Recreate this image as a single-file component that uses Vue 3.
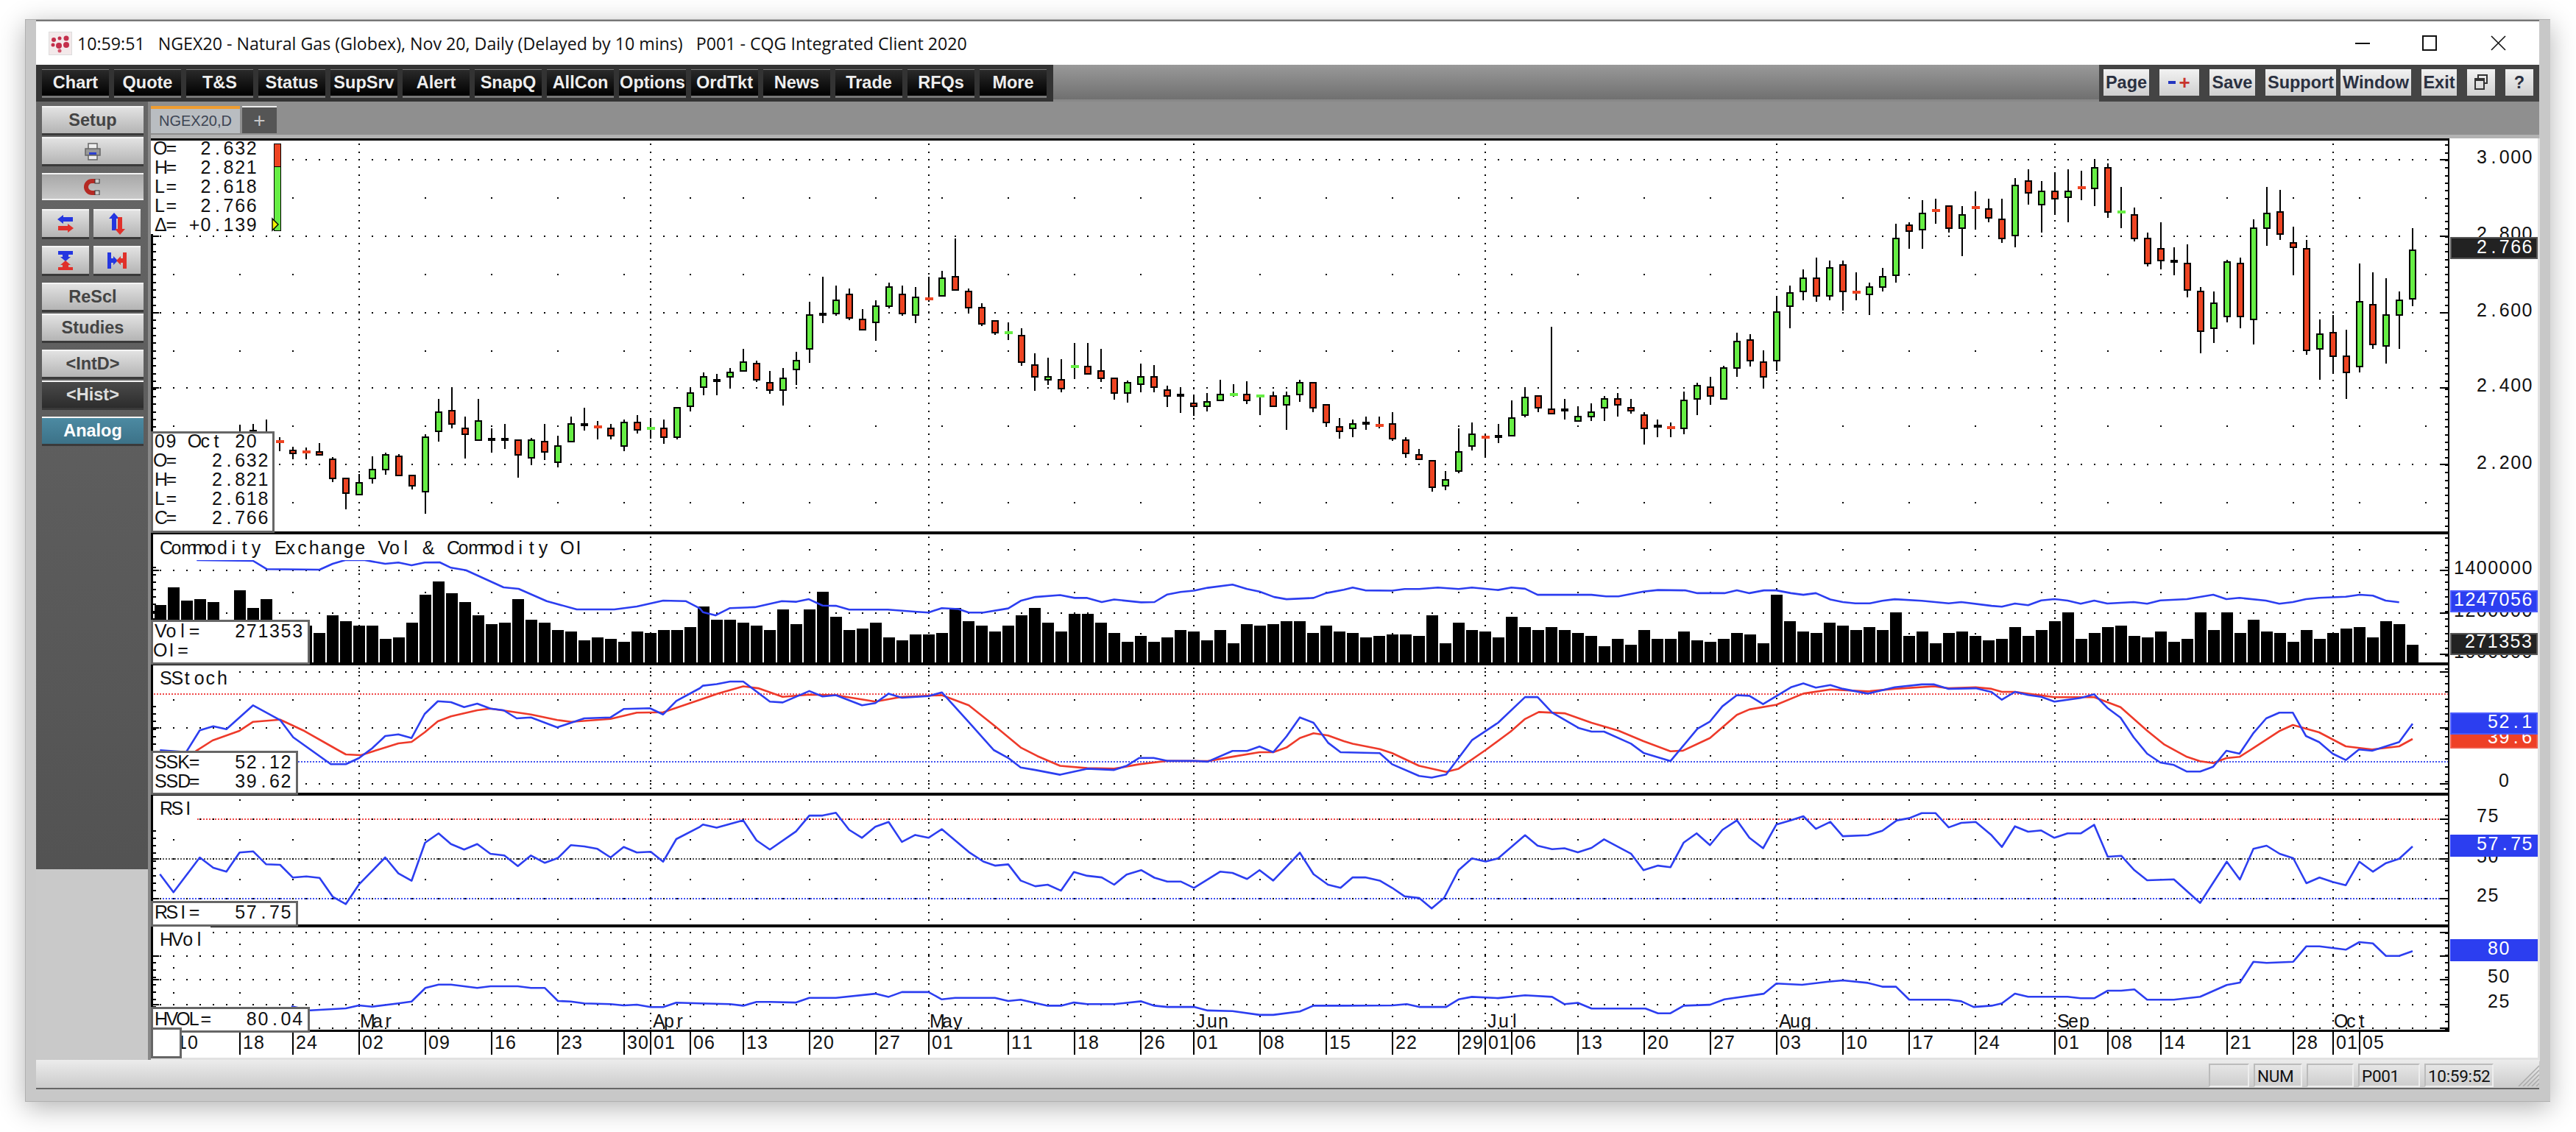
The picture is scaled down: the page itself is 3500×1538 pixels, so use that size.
<template>
  <div class="page">
    <div class="window">
      <!-- Title bar -->
      <div class="titlebar">
        <svg class="logo" width="32" height="32" viewBox="0 0 32 32">
          <rect x="0.5" y="0.5" width="31" height="31" fill="#f3e9ea" stroke="#ddd" />
          <circle cx="7" cy="11" r="3" fill="#c4304c" />
          <circle cx="15" cy="9" r="2.5" fill="#c4304c" />
          <circle cx="24" cy="9" r="3.5" fill="#c4304c" />
          <circle cx="6" cy="18" r="2.5" fill="#c4304c" />
          <circle cx="14" cy="19" r="4" fill="#c4304c" />
          <circle cx="24" cy="18" r="4" fill="#c4304c" />
          <circle cx="15" cy="26" r="2.5" fill="#d3566c" />
        </svg>
        <span class="title-text">{{ windowTitle }}</span>
        <div class="win-controls">
          <svg width="300" height="30" viewBox="0 0 300 30">
            <rect x="50" y="14" width="20" height="2" fill="#111" />
            <rect x="142" y="5" width="18" height="19" fill="none" stroke="#111" stroke-width="2" />
            <path d="M235 5 L254 24 M254 5 L235 24" stroke="#111" stroke-width="1.6" fill="none" />
          </svg>
        </div>
      </div>

      <!-- Toolbar -->
      <div class="toolbar">
        <div class="tb-left">
          <button v-for="b in mainButtons" :key="b" class="tb-btn">{{ b }}</button>
        </div>
        <div class="tb-fill"></div>
        <div class="tb-right">
          <button
            v-for="b in rightButtons"
            :key="b.label"
            :class="['rt-btn', { tight: b.tight }]"
            :style="{ width: b.w + 'px' }"
          >
            <template v-if="b.label === 'zoom'">
              <span class="minus"></span><span class="plus">+</span>
            </template>
            <svg v-else-if="b.label === 'restore'" width="20" height="26" viewBox="0 0 20 26">
              <path d="M6 7V3h12v11h-4" fill="none" stroke="#333" stroke-width="2" />
              <rect x="2" y="8" width="12" height="14" fill="none" stroke="#333" stroke-width="2" />
              <rect x="2" y="8" width="12" height="3" fill="#333" />
            </svg>
            <template v-else>{{ b.label }}</template>
          </button>
        </div>
      </div>

      <div class="body">
        <!-- Left buttons -->
        <div class="side">
          <div class="side-group">
            <button class="side-btn">Setup</button>
            <button class="side-btn">
              <svg width="22" height="24" viewBox="0 0 22 24">
                <rect x="5" y="1" width="12" height="8" fill="#eee" stroke="#666" stroke-width="1.5" />
                <rect x="1" y="8" width="20" height="9" fill="#999" stroke="#666" stroke-width="1.5" />
                <rect x="6" y="13" width="10" height="3" fill="#2c3fd0" />
                <rect x="5" y="17" width="12" height="6" fill="#eee" stroke="#666" stroke-width="1.5" />
              </svg>
            </button>
          </div>
          <div class="side-group">
            <button class="side-btn inset">
              <svg width="24" height="22" viewBox="0 0 24 22">
                <path d="M20 3H11a8 8 0 0 0 0 16h9" fill="none" stroke="#b52a24" stroke-width="6" />
                <rect x="15" y="0" width="6" height="6" fill="#ccc" stroke="#333" />
                <rect x="15" y="16" width="6" height="6" fill="#ccc" stroke="#333" />
              </svg>
            </button>
          </div>
          <div class="side-group">
            <div class="side-row">
              <button class="side-btn half">
                <svg width="24" height="24" viewBox="0 0 24 24">
                  <path d="M1 6 9 0v3h13v6H9v3z" fill="#2436e0" />
                  <path d="M23 18 15 12v3H2v6h13v3z" fill="#e0302a" />
                </svg>
              </button>
              <button class="side-btn half">
                <svg width="24" height="30" viewBox="0 0 24 30">
                  <path d="M8 0 15 8h-4v16H5V8H1z" fill="#2436e0" />
                  <path d="M16 30 9 22h4V6h6v16h4z" fill="#e0302a" />
                </svg>
              </button>
            </div>
          </div>
          <div class="side-group">
            <div class="side-row">
              <button class="side-btn half">
                <svg width="24" height="26" viewBox="0 0 24 26">
                  <path d="M2 0h20v5h-6v3h3l-7 6-7-6h3V5H2z" fill="#2436e0" />
                  <path d="M2 26h20v-4h-6v-3h3l-7-6-7 6h3v3H2z" fill="#e0302a" />
                </svg>
              </button>
              <button class="side-btn half">
                <svg width="26" height="26" viewBox="0 0 26 26">
                  <path d="M0 2v22h5v-8h3v3l6-6-6-6v3H5V2z" fill="#2436e0" />
                  <path d="M26 2v22h-5v-8h-3v3l-6-6 6-6v3h3V2z" fill="#e0302a" />
                </svg>
              </button>
            </div>
          </div>
          <div class="side-group">
            <button class="side-btn">ReScl</button>
            <button class="side-btn">Studies</button>
          </div>
          <div class="side-group">
            <button class="side-btn">&lt;IntD&gt;</button>
            <button class="side-btn dark">&lt;Hist&gt;</button>
          </div>
          <div class="side-group">
            <button class="side-btn teal">Analog</button>
          </div>
          <div class="side-spacer"></div>
          <div class="side-foot"></div>
        </div>

        <div class="main">
          <!-- Tabs -->
          <div class="tabs">
            <div class="tab active">NGEX20,D</div>
            <div class="tab add">+</div>
          </div>

          <!-- Chart, drawn in page coordinates -->
          <svg class="chart" width="3246" height="1254" viewBox="204 188 3246 1254">
            <rect x="204" y="188" width="3246" height="1254" fill="#fff" />
            <rect x="204" y="1437" width="3246" height="5" fill="#e2e2e2" />
            <rect x="3447" y="188" width="3" height="1254" fill="#e2e2e2" />

            <!-- study reference lines -->
            <line
              v-for="l in refLines"
              :key="l.y"
              :x1="l.x"
              :y1="l.y"
              x2="3326"
              :y2="l.y"
              :stroke="l.c"
              stroke-width="2"
              stroke-dasharray="2 2"
              shape-rendering="crispEdges"
            />

            <path :d="dotPath" fill="#000" shape-rendering="crispEdges" />

            <!-- volume -->
            <path :d="volumePath" fill="#000" shape-rendering="crispEdges" />

            <!-- candles -->
            <g shape-rendering="crispEdges">
              <template v-for="c in candles" :key="c.x">
                <rect :x="c.x - 1" :y="c.h" width="2" :height="c.l - c.h" fill="#000" />
                <rect v-if="c.flat" :x="c.x - 5" :y="c.t - 2" width="11" height="4" :fill="c.color" />
                <rect
                  v-else
                  :x="c.x - 4"
                  :y="c.t + 1"
                  width="8"
                  :height="c.b - c.t - 2"
                  :fill="c.color"
                  stroke="#000"
                  stroke-width="2"
                />
              </template>
            </g>

            <!-- indicator curves -->
            <polyline
              v-for="s in series"
              :key="s.id"
              :points="s.points"
              fill="none"
              :stroke="s.color"
              stroke-width="2.6"
              stroke-linejoin="round"
            />

            <!-- frames -->
            <path :d="framePath" fill="#000" shape-rendering="crispEdges" />

            <!-- date axis -->
            <text
              v-for="d in dateLabels"
              :key="d.x"
              class="mono"
              :x="cells(d.s, d.x, 15)"
              y="1425"
            >{{ d.s }}</text>
            <text
              v-for="m in monthLabels"
              :key="m.s"
              class="mono"
              :x="cells(m.s, m.x, 15)"
              y="1396"
            >{{ m.s }}</text>

            <!-- panel titles -->
            <g v-for="t in panelTitles" :key="t.s">
              <rect x="207" :y="t.y - 26" :width="t.w" height="34" fill="#fff" />
              <text class="mono" :x="cells(t.s, 215)" :y="t.y">{{ t.s }}</text>
            </g>

            <!-- value legends -->
            <g v-for="g in legends" :key="g.y">
              <rect
                :x="g.x"
                :y="g.y"
                :width="g.w"
                :height="g.h"
                fill="#fff"
                :stroke="g.line ? '#666' : 'none'"
                stroke-width="3"
                shape-rendering="crispEdges"
              />
              <text
                v-for="(r, i) in g.rows"
                :key="i"
                class="mono"
                :x="cells(r, 208)"
                :y="g.base + i * 26"
              >{{ r }}</text>
            </g>

            <!-- bar in the top legend -->
            <g shape-rendering="crispEdges">
              <rect x="371" y="195" width="9" height="31" fill="#ee4422" stroke="#000" stroke-width="1" />
              <rect x="371" y="226" width="9" height="87" fill="#66ee44" stroke="#000" stroke-width="1" />
            </g>
            <path d="M369 297l8 8-8 8z" fill="#f2f200" stroke="#000" stroke-width="1.4" />

            <!-- right axis -->
            <template v-for="(a, i) in axisItems" :key="i">
              <rect
                v-if="a.box"
                x="3329"
                :y="a.y"
                width="117"
                :height="a.h"
                :fill="a.box"
                :stroke="a.edge"
                stroke-width="2"
                shape-rendering="crispEdges"
              />
              <text v-else class="mono" :x="cells(a.s, a.x, 15.4)" :y="a.y" :style="a.c ? { fill: a.c } : null">{{ a.s }}</text>
            </template>
          </svg>
        </div>
      </div>

      <!-- Status bar -->
      <div class="statusbar">
        <div
          v-for="(p, i) in statusPanes"
          :key="i"
          class="pane"
          :style="{ width: p.w + 'px' }"
        >{{ p.s }}</div>
        <svg class="grip" width="30" height="30" viewBox="0 0 30 30">
          <path d="M30 2 2 30M30 8 8 30M30 14 14 30M30 20 20 30M30 26 26 30" stroke="#aaa" stroke-width="1.5" />
        </svg>
      </div>
    </div>
  </div>
</template>

<script setup>
const windowTitle = '10:59:51   NGEX20 - Natural Gas (Globex), Nov 20, Daily (Delayed by 10 mins)   P001 - CQG Integrated Client 2020'

const mainButtons = [
  'Chart', 'Quote', 'T&S', 'Status', 'SupSrv', 'Alert', 'SnapQ',
  'AllCon', 'Options', 'OrdTkt', 'News', 'Trade', 'RFQs', 'More'
]

const rightButtons = [
  { label: 'Page', w: 62 },
  { label: 'zoom', w: 54 },
  { label: 'Save', w: 62 },
  { label: 'Support', w: 96, tight: true },
  { label: 'Window', w: 96 },
  { label: 'Exit', w: 48 },
  { label: 'restore', w: 38 },
  { label: '?', w: 38 }
]

const statusPanes = [
  { s: '', w: 55 },
  { s: 'NUM', w: 66 },
  { s: '', w: 64 },
  { s: 'P001', w: 84 },
  { s: '10:59:52', w: 94 }
]

// bar geometry: one trading day every 18px
const barX = (k) => 379 + 18 * k

// The chart text is fixed pitch, so every glyph gets its own x
const NARROW = 'ilI.,:;|'
const MEDIUM = 'trfj '
const WIDE = 'mMWO&'
const cells = (str, x0, pitch = 15.6) =>
  [...str]
    .map((ch, i) => {
      let off = 1
      if (NARROW.includes(ch)) off = 5
      else if (MEDIUM.includes(ch)) off = 3.5
      else if (WIDE.includes(ch)) off = -1
      return (x0 + i * pitch + off).toFixed(1)
    })
    .join(' ')

// high, body top, body bottom, low, colour (1 green, 0 red, 2 black); starts at bar -3
const candleRows = [
  [577, 590, 600, 610, 1], [576, 584, 600, 610, 0], [570, 590, 600, 610, 0],
  [594, 600, 600, 613, 0], [607, 611, 617, 624, 0], [608, 614, 614, 624, 0], [602, 613, 619, 619, 0],
  [621, 623, 651, 655, 0], [649, 649, 671, 692, 0], [644, 655, 673, 673, 1], [620, 637, 651, 657, 1],
  [615, 617, 639, 645, 1], [617, 619, 647, 647, 0], [645, 645, 661, 665, 0], [590, 593, 669, 698, 1],
  [542, 559, 587, 600, 1], [526, 557, 577, 582, 0], [566, 581, 591, 623, 0], [542, 571, 599, 599, 1],
  [582, 595, 599, 615, 1], [576, 595, 599, 610, 0], [597, 597, 619, 649, 0], [595, 597, 623, 632, 1],
  [576, 599, 615, 625, 0], [592, 605, 629, 635, 1], [566, 575, 601, 601, 1], [554, 575, 579, 585, 0],
  [572, 580, 580, 597, 0], [576, 581, 593, 597, 0], [570, 573, 607, 613, 1], [564, 573, 585, 589, 0],
  [568, 582, 582, 596, 1], [570, 581, 595, 603, 0], [553, 553, 595, 597, 1], [526, 533, 553, 559, 1],
  [506, 511, 527, 537, 1], [508, 515, 519, 537, 1], [500, 505, 513, 527, 1], [474, 491, 505, 505, 1],
  [490, 493, 517, 519, 0], [504, 519, 531, 535, 0], [500, 513, 531, 551, 1], [478, 489, 503, 523, 1],
  [410, 427, 475, 493, 1], [376, 425, 429, 439, 0], [388, 407, 427, 429, 1], [392, 399, 433, 435, 0],
  [420, 433, 449, 449, 0], [408, 415, 439, 463, 1], [384, 389, 417, 419, 1], [388, 399, 427, 429, 0],
  [390, 403, 429, 439, 1], [376, 406, 406, 410, 0], [368, 377, 403, 403, 1], [324, 375, 395, 395, 0],
  [392, 395, 419, 425, 0], [412, 417, 441, 443, 0], [435, 435, 453, 455, 0], [438, 452, 452, 462, 1],
  [446, 455, 493, 497, 0], [480, 495, 513, 531, 0], [486, 511, 517, 523, 1], [488, 515, 529, 533, 0],
  [466, 498, 498, 515, 1], [466, 497, 509, 509, 0], [474, 503, 515, 519, 0], [513, 513, 535, 543, 0],
  [517, 519, 535, 547, 1], [494, 511, 523, 533, 1], [496, 511, 527, 533, 0], [524, 529, 539, 553, 0],
  [526, 535, 539, 561, 0], [536, 547, 553, 565, 0], [534, 545, 553, 559, 1], [516, 535, 545, 545, 1],
  [522, 536, 536, 539, 1], [518, 535, 545, 549, 0], [538, 538, 538, 564, 1], [532, 537, 553, 553, 0],
  [532, 537, 551, 584, 1], [516, 519, 537, 546, 1], [519, 519, 555, 560, 0], [549, 549, 575, 580, 0],
  [568, 579, 587, 596, 0], [570, 575, 583, 594, 1], [566, 573, 577, 584, 1], [566, 578, 578, 582, 0],
  [560, 575, 597, 599, 0], [594, 597, 617, 622, 0], [610, 617, 625, 625, 0], [625, 625, 663, 668, 0],
  [640, 651, 661, 666, 1], [582, 613, 641, 643, 1], [574, 589, 607, 612, 1], [590, 594, 594, 622, 0],
  [576, 591, 595, 602, 1], [544, 567, 593, 593, 1], [526, 539, 565, 567, 1], [537, 537, 555, 560, 0],
  [444, 555, 563, 563, 0], [542, 555, 559, 570, 0], [552, 565, 573, 573, 1], [548, 559, 567, 572, 1],
  [538, 541, 555, 572, 1], [534, 541, 551, 566, 0], [542, 553, 559, 562, 0], [560, 563, 583, 604, 0],
  [570, 579, 579, 594, 2], [574, 581, 581, 594, 0], [532, 543, 583, 590, 1], [520, 523, 543, 564, 1],
  [512, 525, 539, 550, 0], [497, 499, 543, 543, 1], [452, 463, 501, 512, 1], [454, 461, 491, 498, 0],
  [476, 491, 513, 528, 0], [402, 423, 491, 504, 1], [388, 397, 417, 446, 1], [366, 377, 397, 408, 1],
  [350, 377, 403, 410, 0], [354, 363, 403, 408, 1], [354, 359, 397, 422, 0], [370, 397, 397, 408, 0],
  [384, 389, 401, 428, 1], [364, 375, 391, 396, 1], [304, 323, 375, 384, 1], [302, 305, 315, 338, 0],
  [272, 289, 313, 338, 1], [270, 286, 286, 304, 0], [279, 279, 311, 316, 0], [280, 291, 311, 348, 1],
  [260, 282, 282, 312, 0], [270, 283, 297, 302, 0], [270, 297, 325, 330, 0], [242, 251, 321, 336, 1],
  [230, 245, 263, 278, 0], [246, 259, 279, 316, 1], [234, 259, 271, 292, 0], [230, 259, 269, 302, 1],
  [232, 255, 255, 272, 0], [216, 227, 257, 280, 1], [222, 227, 289, 296, 0], [254, 288, 288, 310, 1],
  [282, 291, 325, 328, 0], [316, 323, 359, 362, 0], [302, 337, 355, 366, 0], [336, 353, 357, 374, 0],
  [332, 357, 395, 404, 0], [390, 395, 451, 480, 0], [396, 411, 447, 466, 1], [353, 355, 431, 438, 1],
  [350, 357, 431, 446, 0], [298, 309, 435, 468, 1], [254, 289, 311, 334, 1], [258, 287, 319, 326, 0],
  [308, 329, 337, 374, 0], [326, 337, 477, 482, 0], [434, 453, 475, 516, 1], [428, 451, 485, 508, 0],
  [448, 483, 507, 542, 0], [358, 409, 499, 506, 1], [370, 413, 469, 474, 0], [378, 427, 471, 494, 1],
  [396, 407, 429, 474, 1], [310, 339, 407, 416, 1]
]

const COLORS = ['#ee4422', '#66ee44', '#000']
const candles = candleRows.map(([h, t, b, l, c], i) => ({
  x: barX(i - 3), h, t, b, l,
  flat: t === b,
  color: COLORS[c]
}))

// volume bar tops, read from four crops of the panel
const volumeTops = [
  ...[366, 294, 348, 342, 354, 440, 306, 378, 342, 450, 450, 450, 480, 408, 432, 450, 450, 504, 498,
    438, 324, 270, 318, 354, 408, 444, 438, 342, 426, 438, 468, 474, 510, 498, 504, 516, 474, 480,
    468, 468, 456].map((y) => 700 + y / 3),
  ...[230, 272, 272, 281, 290, 304, 239, 286, 239, 184, 262, 304, 300, 281, 328, 337, 318, 318, 314,
    235, 276, 290, 309, 290, 258, 235, 281, 309, 253, 253, 281, 314, 341, 323, 341, 328, 304, 309,
    337, 304, 346, 286, 290, 286, 276, 276, 314, 290, 309, 314, 328, 323, 318, 318, 323, 258, 346,
    281, 304, 309, 328, 262, 295, 304, 295, 304, 314, 323, 355, 332, 351, 304, 332, 332, 309, 337,
    341, 332, 314, 318, 346, 193, 276, 309, 314, 281, 290, 304, 295, 304, 249, 323, 309, 346, 314,
    309, 323].map((y) => 725 + y / 2.323),
  ...[510, 504, 456, 492, 468, 432, 396, 504, 480, 456, 450, 492, 498, 474, 516, 504, 396, 468, 396,
    480, 426, 474, 480, 516, 468, 504, 480, 462, 456, 498, 432, 444, 528].map((y) => 700 + y / 3)
]
const volumePath = volumeTops
  .map((y, i) => `M${barX(i - 9) - 8} ${Math.round(y)}h16V902h-16z`)
  .join('')

// curves were traced off zoomed crops: [left, x scale, top, y scale]
const CROP_A = [150, 1.96, 700, 3]
const CROP_A2 = [150, 1.96, 1100, 3]
const CROP_B = [940, 1.772, 725, 2.323]
const CROP_C = [1820, 1.772, 725, 2.323]
const CROP_D = [2700, 1.96, 700, 3]
const CROP_D2 = [2700, 1.96, 1100, 3]

const trace = (...parts) => {
  const out = []
  let last = -1
  for (const [[x0, sx, y0, sy], flat] of parts) {
    for (let i = 0; i < flat.length; i += 2) {
      const x = x0 + flat[i] / sx
      if (x <= last) continue
      last = x
      out.push(`${x.toFixed(1)},${(y0 + flat[i + 1] / sy).toFixed(1)}`)
    }
  }
  return out.join(' ')
}

const BLUE = '#2c3ef0'
const RED = '#ee3a2a'

const series = [
  {
    id: 'oi',
    color: BLUE,
    points: trace(
      [CROP_A, [228, 183, 378, 186, 415, 220, 555, 222, 590, 198, 625, 182, 675, 183, 730, 198, 765, 193, 800, 204, 835, 193, 875, 192, 905, 214, 945, 224, 1045, 294, 1085, 300, 1160, 350, 1240, 384, 1340, 384, 1400, 372, 1470, 348, 1530, 350, 1568, 380]],
      [CROP_B, [0, 225, 25, 248, 55, 258, 90, 235, 150, 232, 215, 213, 250, 215, 280, 207, 313, 227, 345, 228, 377, 240, 470, 240, 540, 247, 568, 249, 600, 235, 640, 238, 665, 249, 700, 249, 760, 236, 790, 212, 825, 200, 885, 194, 920, 203, 950, 203, 985, 216, 1015, 208, 1080, 217, 1112, 216, 1143, 192, 1175, 184, 1207, 180, 1240, 171, 1300, 161, 1335, 175, 1365, 183, 1400, 200, 1430, 207, 1495, 203, 1525, 188, 1568, 177]],
      [CROP_C, [0, 178, 30, 170, 60, 179, 125, 180, 155, 175, 190, 175, 235, 170, 285, 175, 317, 170, 380, 178, 412, 170, 445, 174, 475, 193, 605, 193, 640, 198, 670, 198, 730, 183, 765, 178, 830, 179, 860, 188, 925, 188, 955, 179, 985, 188, 1020, 179, 1050, 179, 1085, 188, 1115, 193, 1145, 188, 1180, 208, 1210, 216, 1240, 220, 1275, 220, 1305, 212, 1335, 207, 1400, 212, 1465, 220, 1495, 216, 1568, 228]],
      [CROP_D, [0, 367, 37, 373, 72, 360, 107, 367, 142, 347, 177, 342, 212, 348, 247, 361, 283, 348, 318, 360, 388, 354, 424, 361, 459, 347, 530, 342, 600, 324, 635, 342, 670, 337, 740, 348, 776, 361, 812, 354, 847, 342, 882, 337, 953, 332, 990, 324, 1025, 328, 1059, 348, 1095, 355]]
    )
  },
  {
    id: 'ssd',
    color: RED,
    points: trace(
      [CROP_A, [225, 962, 270, 918, 340, 880, 378, 842, 450, 833, 515, 880, 590, 945, 625, 975, 665, 978, 765, 930, 800, 924, 835, 885, 870, 840, 905, 820, 975, 795, 1010, 788, 1118, 812, 1188, 835, 1225, 842, 1330, 830, 1400, 805, 1470, 803, 1568, 752]],
      [CROP_B, [0, 535, 60, 505, 122, 482, 158, 488, 217, 515, 281, 508, 345, 510, 440, 530, 504, 515, 600, 510, 665, 542, 730, 610, 790, 675, 830, 702, 885, 733, 950, 740, 1015, 742, 1075, 728, 1143, 717, 1240, 718, 1300, 704, 1365, 690, 1398, 690, 1430, 675, 1462, 645, 1495, 630, 1530, 637, 1568, 655]],
      [CROP_C, [0, 650, 30, 663, 95, 680, 125, 693, 190, 733, 255, 752, 285, 742, 350, 683, 410, 625, 445, 585, 478, 563, 540, 567, 605, 597, 670, 622, 730, 655, 795, 687, 825, 685, 890, 645, 955, 572, 985, 555, 1050, 540, 1115, 505, 1180, 492, 1270, 498, 1335, 490, 1430, 482, 1465, 488, 1530, 485, 1568, 490]],
      [CROP_D, [0, 705, 37, 720, 72, 720, 177, 742, 283, 742, 353, 782, 424, 878, 470, 935, 530, 985, 565, 1003, 600, 1010, 635, 990, 670, 985, 706, 950, 776, 880, 812, 855, 882, 885, 953, 942, 1023, 955, 1095, 942, 1131, 912]]
    )
  },
  {
    id: 'ssk',
    color: BLUE,
    points: trace(
      [CROP_A, [130, 958, 200, 965, 236, 877, 272, 860, 307, 872, 378, 775, 450, 835, 485, 905, 585, 1015, 625, 1015, 660, 990, 695, 950, 730, 900, 765, 893, 800, 908, 835, 810, 870, 758, 905, 762, 940, 782, 975, 768, 1010, 788, 1045, 795, 1080, 828, 1118, 824, 1188, 865, 1260, 828, 1330, 824, 1365, 790, 1435, 787, 1470, 812, 1505, 757, 1568, 705]],
      [CROP_B, [0, 500, 25, 480, 58, 475, 90, 467, 122, 467, 186, 530, 217, 533, 281, 497, 313, 514, 345, 510, 408, 542, 440, 535, 472, 505, 504, 518, 568, 513, 600, 501, 665, 595, 725, 683, 760, 708, 790, 738, 825, 746, 885, 761, 950, 742, 1015, 746, 1045, 733, 1075, 708, 1110, 708, 1143, 717, 1207, 717, 1240, 720, 1300, 686, 1335, 686, 1365, 672, 1398, 690, 1430, 640, 1462, 580, 1495, 597, 1530, 660, 1560, 690]],
      [CROP_C, [0, 686, 95, 693, 125, 728, 190, 765, 220, 770, 255, 760, 285, 708, 317, 652, 380, 597, 445, 516, 475, 516, 510, 565, 575, 614, 605, 625, 635, 625, 700, 663, 730, 692, 795, 718, 860, 616, 890, 593, 920, 545, 955, 510, 985, 512, 1018, 538, 1085, 485, 1115, 473, 1145, 486, 1180, 478, 1210, 490, 1270, 505, 1335, 485, 1400, 476, 1430, 476, 1465, 490, 1530, 488, 1568, 500]],
      [CROP_D, [0, 705, 37, 752, 72, 720, 107, 733, 142, 740, 177, 760, 212, 752, 247, 745, 283, 730, 318, 785, 353, 825, 388, 905, 424, 972, 459, 1008, 495, 1018, 530, 1045, 565, 1045, 600, 1025, 635, 960, 670, 972, 706, 890, 741, 828, 776, 805, 812, 805, 847, 900, 882, 925, 918, 972, 953, 998, 988, 955, 1023, 960, 1095, 925, 1131, 850]]
    )
  },
  {
    id: 'rsi',
    color: BLUE,
    points: trace(
      [CROP_A2, [130, 263, 166, 337, 236, 195, 272, 237, 307, 253, 342, 175, 378, 170, 413, 223, 450, 225, 484, 277, 520, 272, 555, 278, 590, 355, 625, 385, 660, 305, 730, 195, 765, 260, 800, 290, 836, 135, 872, 97, 905, 140, 940, 163, 975, 140, 1010, 180, 1047, 187, 1083, 230, 1118, 187, 1155, 217, 1190, 197, 1224, 145, 1260, 150, 1295, 160, 1330, 195, 1365, 152, 1400, 175, 1437, 172, 1470, 212, 1505, 120, 1568, 70]],
      [CROP_B, [0, 938, 25, 918, 58, 928, 122, 905, 154, 968, 186, 997, 249, 940, 281, 890, 313, 890, 345, 881, 377, 935, 408, 960, 440, 925, 472, 910, 504, 973, 536, 951, 568, 960, 600, 933, 665, 1005, 700, 1035, 728, 1048, 760, 1044, 790, 1095, 825, 1113, 855, 1108, 887, 1127, 918, 1068, 950, 1080, 985, 1085, 1015, 1108, 1045, 1076, 1080, 1062, 1112, 1086, 1143, 1098, 1175, 1098, 1207, 1118, 1270, 1067, 1300, 1071, 1335, 1090, 1365, 1062, 1398, 1095, 1462, 1007, 1495, 1075, 1530, 1108, 1560, 1118]],
      [CROP_C, [0, 1115, 30, 1085, 60, 1085, 95, 1095, 125, 1118, 155, 1145, 190, 1150, 220, 1183, 250, 1150, 285, 1062, 317, 1025, 350, 1035, 380, 1025, 445, 952, 475, 985, 510, 996, 540, 993, 572, 1006, 605, 992, 635, 965, 700, 1010, 730, 1062, 765, 1048, 795, 1053, 827, 975, 858, 946, 890, 983, 920, 935, 955, 905, 985, 960, 1018, 993, 1050, 918, 1085, 905, 1115, 892, 1145, 932, 1180, 910, 1210, 955, 1270, 952, 1305, 938, 1340, 905, 1370, 898, 1400, 882, 1433, 882, 1465, 927, 1495, 913, 1530, 910, 1568, 952]],
      [CROP_D2, [0, 85, 37, 152, 72, 68, 107, 90, 142, 85, 177, 115, 212, 97, 247, 97, 283, 62, 319, 192, 355, 188, 390, 247, 424, 288, 495, 284, 565, 380, 636, 212, 671, 285, 707, 160, 742, 147, 777, 180, 813, 198, 848, 300, 883, 277, 918, 295, 953, 308, 989, 212, 1025, 253, 1060, 218, 1095, 200, 1131, 150]]
    )
  },
  {
    id: 'hvol',
    color: BLUE,
    points: trace(
      [CROP_A2, [480, 802, 530, 818, 625, 810, 660, 798, 695, 803, 765, 790, 800, 782, 837, 727, 872, 713, 905, 713, 975, 727, 1010, 720, 1083, 720, 1118, 727, 1155, 727, 1190, 780, 1224, 782, 1260, 790, 1330, 793, 1365, 798, 1400, 795, 1437, 805, 1470, 805, 1505, 787, 1568, 790]],
      [CROP_B, [0, 1485, 90, 1485, 122, 1490, 154, 1478, 186, 1478, 249, 1480, 281, 1465, 345, 1465, 440, 1452, 472, 1462, 504, 1447, 568, 1447, 600, 1470, 632, 1465, 728, 1465, 760, 1475, 790, 1471, 855, 1490, 887, 1490, 918, 1480, 950, 1485, 1015, 1485, 1080, 1476, 1112, 1490, 1143, 1494, 1207, 1494, 1240, 1505, 1300, 1507, 1365, 1519, 1398, 1519, 1462, 1508, 1495, 1490, 1568, 1490]],
      [CROP_C, [0, 1490, 125, 1489, 160, 1485, 190, 1494, 255, 1494, 285, 1470, 317, 1462, 380, 1466, 445, 1457, 510, 1462, 540, 1485, 572, 1481, 605, 1499, 735, 1499, 765, 1514, 795, 1514, 827, 1490, 890, 1487, 925, 1470, 1020, 1452, 1050, 1420, 1112, 1424, 1175, 1414, 1210, 1410, 1270, 1418, 1305, 1430, 1338, 1430, 1370, 1471, 1465, 1471, 1495, 1476, 1525, 1494, 1568, 1490]],
      [CROP_D2, [0, 798, 37, 790, 72, 750, 107, 763, 212, 763, 247, 769, 283, 769, 319, 738, 355, 738, 390, 733, 424, 775, 495, 775, 565, 763, 636, 715, 671, 705, 707, 620, 742, 625, 813, 620, 848, 557, 883, 557, 953, 571, 989, 540, 1025, 545, 1060, 596, 1095, 596, 1131, 577]]
    )
  }
]

const refLines = [
  { y: 943, x: 204, c: '#f04848' },
  { y: 1035, x: 204, c: '#4050f0' },
  { y: 1113, x: 267, c: '#f04848' },
  { y: 1167, x: 204, c: '#555' },
  { y: 1221, x: 204, c: '#4050f0' }
]

// grid: full rows dot every bar, half rows only under the date ticks
const FULL_ROWS = [217, 321, 425, 527, 631, 775, 833, 889, 913, 989, 1065, 1113, 1167, 1221, 1267, 1299, 1331, 1365, 1397]
const HALF_ROWS = [269, 373, 477, 579, 683, 747, 805, 861, 951, 1027, 1087, 1141, 1195, 1249, 1283, 1315, 1349, 1381]
const HALF_COLS = [-8, -3, 1, 11, 16, 21, 26, 31, 35, 40, 45, 50, 55, 60, 65, 74, 79, 84, 89, 93, 98, 103, 108, 118, 123, 128, 133, 138, 142, 147, 152, 157, 162]
const MONTH_COLS = [6, 28, 49, 69, 91, 113, 134, 155]

const PANELS = [
  { from: 196.3, to: 720, step: 10.35, leftFrom: 321, major: [217, 321, 425, 527, 631] },
  { from: 730, to: 896, step: 10, leftFrom: 763, major: [775, 833, 889] },
  { from: 908, to: 1075, step: 10.2, leftFrom: 950, major: [913, 989, 1065] },
  { from: 1087, to: 1254, step: 10.2, leftFrom: 1123, major: [1113, 1167, 1221] },
  { from: 1267, to: 1398, step: 10, leftFrom: 1299, major: [1267, 1299, 1331, 1365, 1397] }
]

const dot = (x, y) => `M${x - 1} ${y - 1}h2v2h-2z`

const dotParts = []
for (const y of FULL_ROWS) {
  for (let k = -9; k <= 162; k++) dotParts.push(dot(barX(k), y))
}
for (const y of HALF_ROWS) {
  for (const k of HALF_COLS) dotParts.push(dot(barX(k), y))
}
for (const p of PANELS) {
  for (let y = p.from; y < p.to; y += p.step) {
    for (const k of MONTH_COLS) dotParts.push(dot(barX(k), Math.round(y)))
  }
}
const dotPath = dotParts.join('')

const frameParts = [
  'M204 188H3327V191H204z',
  'M204 188H207V1402H204z',
  'M3325 188H3327V1402H3325z',
  'M204 722H3327V726H204z',
  'M204 900H3327V904H204z',
  'M204 1077H3327V1081H204z',
  'M204 1256H3327V1260H204z',
  'M204 1399H3327V1402H204z'
]
for (const p of PANELS) {
  for (let y = p.from; y < p.to; y += p.step) {
    if (y >= p.leftFrom) frameParts.push(`M207 ${Math.round(y)}h4v2h-4z`)
    frameParts.push(`M3321 ${Math.round(y)}h4v2h-4z`)
  }
  for (const y of p.major) {
    if (y >= p.leftFrom) frameParts.push(`M207 ${y - 1}h8v2h-8z`)
    frameParts.push(`M3314 ${y - 1}h11v2h-11z`)
  }
}

const DATES = [
  [-8, '10'], [-3, '18'], [1, '24'], [6, '02'], [11, '09'], [16, '16'], [21, '23'], [26, '30'],
  [28, '01'], [31, '06'], [35, '13'], [40, '20'], [45, '27'], [49, '01'], [55, '11'], [60, '18'],
  [65, '26'], [69, '01'], [74, '08'], [79, '15'], [84, '22'], [89, '29'], [91, '01'], [93, '06'],
  [98, '13'], [103, '20'], [108, '27'], [113, '03'], [118, '10'], [123, '17'], [128, '24'],
  [134, '01'], [138, '08'], [142, '14'], [147, '21'], [152, '28'], [155, '01'], [157, '05']
]
const dateLabels = DATES.map(([k, s]) => ({ x: barX(k) + 3, s }))
for (const [k] of DATES) frameParts.push(`M${barX(k) - 1} 1402h2v31h-2z`)
const framePath = frameParts.join('')

const monthLabels = ['Mar', 'Apr', 'May', 'Jun', 'Jul', 'Aug', 'Sep', 'Oct'].map((s, i) => ({
  s,
  x: barX(MONTH_COLS[i]) + 2
}))

const panelTitles = [
  { s: 'Commodity Exchange Vol & Commodity OI', y: 753, w: 603 },
  { s: 'SStoch', y: 930, w: 115 },
  { s: 'RSI', y: 1107, w: 60 },
  { s: 'HVol', y: 1285, w: 78 }
]

const legends = [
  { x: 204, y: 191, w: 188, h: 127, base: 210, rows: ['O=  2.632', 'H=  2.821', 'L=  2.618', 'L=  2.766', 'Δ= +0.139'] },
  { x: 205.5, y: 587.5, w: 165, h: 135, line: true, base: 608, rows: ['09 Oct 20', 'O=   2.632', 'H=   2.821', 'L=   2.618', 'C=   2.766'] },
  { x: 205.5, y: 843.5, w: 213, h: 58, line: true, base: 866, rows: ['Vol=   271353', 'OI='] },
  { x: 205.5, y: 1021.5, w: 197, h: 57, line: true, base: 1044, rows: ['SSK=   52.12', 'SSD=   39.62'] },
  { x: 205.5, y: 1225.5, w: 197, h: 32, line: true, base: 1248, rows: ['RSI=   57.75'] },
  { x: 205.5, y: 1369.5, w: 213, h: 32, line: true, base: 1393, rows: ['HVOL=   80.04'] },
  { x: 205.5, y: 1397.5, w: 39, h: 39, line: true, base: 0, rows: [] }
]

// drawn in this order: later items sit on top of earlier ones
const axisItems = [
  { s: '3.000', x: 3363, y: 222 },
  { s: '2.800', x: 3363, y: 326 },
  { box: '#222', edge: '#555', y: 323, h: 28 },
  { s: '2.766', x: 3363, y: 344, c: '#fff' },
  { s: '2.600', x: 3363, y: 430 },
  { s: '2.400', x: 3363, y: 532 },
  { s: '2.200', x: 3363, y: 637 },
  { s: '1400000', x: 3332, y: 780 },
  { s: '1200000', x: 3332, y: 838 },
  { box: BLUE, edge: '#4a5aff', y: 803, h: 28 },
  { s: '1247056', x: 3332, y: 823, c: '#fff' },
  { s: '1000000', x: 3332, y: 894 },
  { box: '#222', edge: '#555', y: 861, h: 28 },
  { s: '271353', x: 3347, y: 880, c: '#fff' },
  { box: '#ee4026', edge: '#f05a48', y: 988, h: 28 },
  { s: '39.6', x: 3378, y: 1010, c: '#fff' },
  { box: BLUE, edge: '#4a5aff', y: 969, h: 28 },
  { s: '52.1', x: 3378, y: 989, c: '#fff' },
  { s: '0', x: 3393, y: 1069 },
  { s: '75', x: 3363, y: 1117 },
  { s: '50', x: 3363, y: 1172 },
  { box: BLUE, edge: BLUE, y: 1135, h: 28 },
  { s: '57.75', x: 3363, y: 1155, c: '#fff' },
  { s: '25', x: 3363, y: 1225 },
  { box: BLUE, edge: BLUE, y: 1277, h: 28 },
  { s: '80', x: 3378, y: 1297, c: '#fff' },
  { s: '50', x: 3378, y: 1335 },
  { s: '25', x: 3378, y: 1369 }
]
</script>

<style>
html,
body {
  margin: 0;
  background: #fff;
  overflow: hidden;
}
</style>

<style scoped>
.page {
  width: 3500px;
  height: 1538px;
  box-sizing: border-box;
  padding: 26px 35px 41px 34px;
  background: #fff;
}

.window {
  height: 100%;
  box-sizing: border-box;
  display: flex;
  flex-direction: column;
  background: #c8c8c8;
  border: 1px solid #b0b0b0;
  border-width: 1px 0 1px 1px;
  padding: 0 15px 16px 14px;
  box-shadow: 0 8px 34px rgba(0, 0, 0, 0.3);
}

.titlebar {
  height: 61px;
  flex: none;
  display: flex;
  align-items: center;
  background: #fff;
  border-top: 2px solid #777;
  box-sizing: border-box;
  padding-left: 17px;
}

.logo {
  flex: none;
  margin-right: 7px;
}

.title-text {
  font-family: "Open Sans", sans-serif;
  font-size: 23.2px;
  color: #111;
  white-space: pre;
}

.win-controls {
  margin-left: auto;
  display: flex;
}

.toolbar {
  height: 50px;
  flex: none;
  display: flex;
}

.tb-left {
  width: 1382px;
  background: #333;
  display: flex;
  gap: 7px;
  padding: 6px 0 0 8px;
  box-sizing: border-box;
}

.tb-btn {
  width: 91px;
  height: 39px;
  padding: 0;
  border: none;
  border-top: 1px solid #777;
  border-bottom: 3px solid #777;
  background: linear-gradient(#2a2a2a, #000);
  color: #eee;
  font: bold 23.5px "Liberation Sans", sans-serif;
}

.tb-fill {
  flex: 1;
  background: linear-gradient(#999, #707070);
  border-bottom: 3px solid #888;
}

.tb-right {
  width: 598px;
  background: #444;
  display: flex;
  gap: 14px;
  padding: 6px 0 0 6px;
  box-sizing: border-box;
}

.rt-btn {
  height: 36px;
  padding: 0;
  border: none;
  background: linear-gradient(#f2f2f2, #cfcfcf);
  color: #2a3040;
  font: bold 23.5px "Liberation Sans", sans-serif;
  white-space: nowrap;
  display: flex;
  align-items: center;
  justify-content: center;
}

.rt-btn.tight {
  margin-right: -8px;
}

.minus {
  width: 10px;
  height: 4px;
  background: #2436c0;
  margin-right: 4px;
}

.plus {
  color: #c8342c;
  font-size: 26px;
  line-height: 1;
}

.body {
  flex: 1;
  min-height: 0;
  display: flex;
}

.side {
  width: 152px;
  flex: none;
  box-sizing: border-box;
  display: flex;
  flex-direction: column;
  gap: 12px;
  padding: 6px 6px 0 8px;
  background: linear-gradient(#666, #4e4e4e);
}

.side-group {
  display: flex;
  flex-direction: column;
  gap: 5px;
}

.side-row {
  display: flex;
  gap: 6px;
}

.side-btn {
  width: 138px;
  height: 37px;
  padding: 0;
  border: none;
  border-top: 2px solid #f4f4f4;
  box-shadow: 0 3px 0 #3a3a3a;
  background: linear-gradient(#e2e2e2, #b4b4b4);
  color: #444;
  font: bold 23.5px "Liberation Sans", sans-serif;
  display: flex;
  align-items: center;
  justify-content: center;
}

.side-btn.half {
  width: 64px;
  height: 38px;
}

.side-btn.inset {
  background: linear-gradient(#a8a8a8, #c8c8c8);
  border-bottom: 2px solid #f0f0f0;
  box-shadow: none;
}

.side-btn.dark {
  background: linear-gradient(#4a4a4a, #2c2c2c);
  color: #ddd;
}

.side-btn.teal {
  background: linear-gradient(#4c8aa2, #3c7288);
  color: #fff;
}

.side-spacer {
  flex: 1;
}

.side-foot {
  height: 259px;
  margin: 0 -6px 0 -8px;
  background: #c9c9c9;
}

.main {
  flex: 1;
  min-width: 0;
  display: flex;
  flex-direction: column;
  border-left: 4px solid #888;
}

.tabs {
  height: 50px;
  flex: none;
  box-sizing: border-box;
  display: flex;
  align-items: flex-start;
  gap: 3px;
  padding-top: 6px;
  background: #8f8f8f;
  border-bottom: 5px solid #b2b2b2;
}

.tab {
  height: 37px;
  box-sizing: border-box;
  display: flex;
  align-items: center;
  justify-content: center;
  font-family: "Liberation Sans", sans-serif;
}

.tab.active {
  width: 121px;
  background: #b9bdc1;
  border-top: 4px solid #ee9c30;
  color: #3d4554;
  font-size: 20px;
}

.tab.add {
  width: 47px;
  background: #555;
  border-top: 2px solid #eee;
  color: #c8c8c8;
  font-size: 28px;
}

.chart {
  display: block;
  flex: none;
}

.mono {
  font-family: "Liberation Sans", sans-serif;
  font-size: 25px;
  white-space: pre;
  fill: #111;
}

.statusbar {
  height: 40px;
  flex: none;
  box-sizing: border-box;
  display: flex;
  align-items: center;
  justify-content: flex-end;
  gap: 6px;
  background: linear-gradient(#ececec, #cbcbcb);
  border-bottom: 2px solid #666;
  padding-top: 3px;
}

.pane {
  height: 32px;
  box-sizing: border-box;
  border: 2px solid #bbb;
  border-right-color: #eee;
  border-bottom-color: #eee;
  padding-left: 3px;
  font: 22.5px/30px Roboto, sans-serif;
  color: #111;
  letter-spacing: -0.3px;
  overflow: hidden;
}

.grip {
  margin-left: 26px;
}
</style>
